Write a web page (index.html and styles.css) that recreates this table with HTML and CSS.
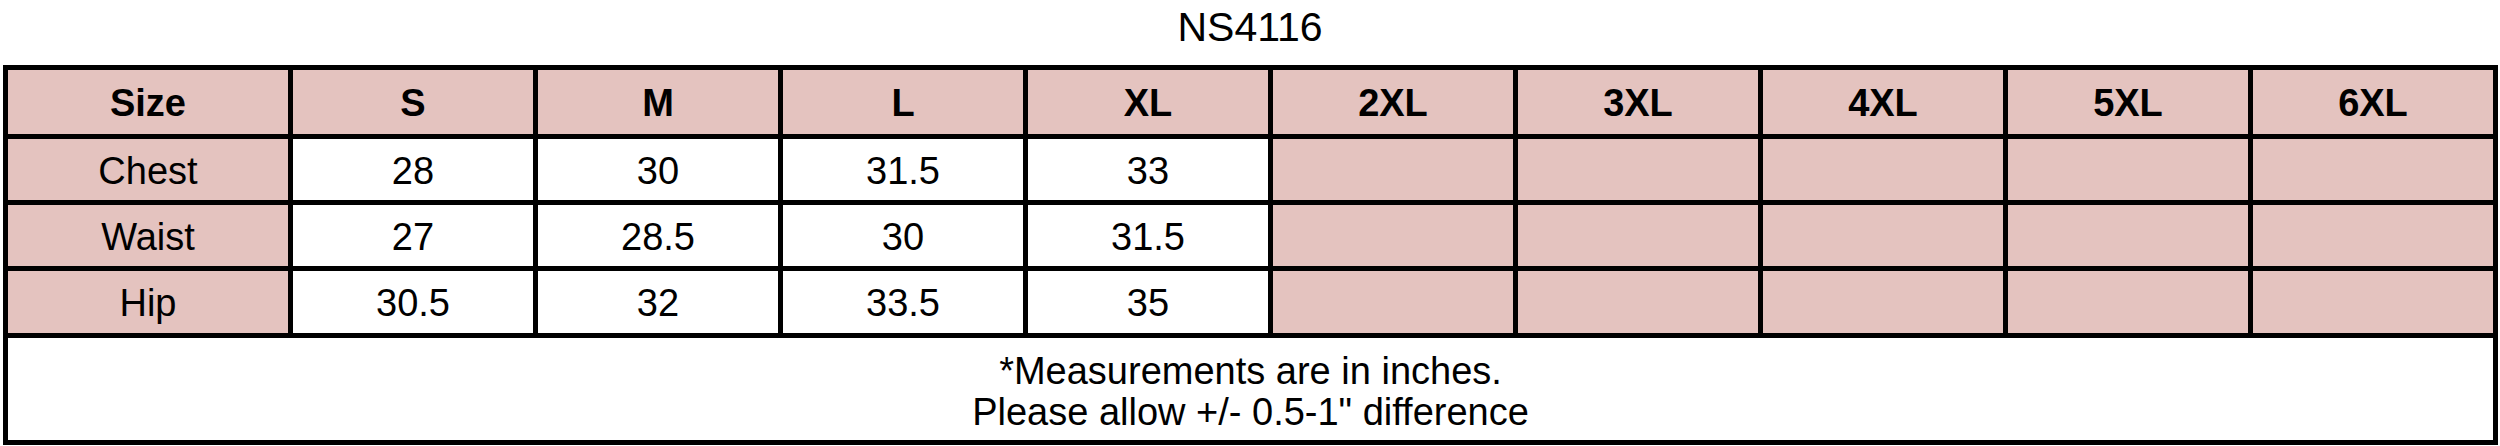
FILE: index.html
```html
<!DOCTYPE html>
<html lang="en">
<head>
  <meta charset="UTF-8" />
  <meta name="viewport" content="width=device-width, initial-scale=1.0"/>
  <title>NS4116 Size Chart</title>
  <link rel="stylesheet" href="styles.css">
</head>
<body>

  <div id="chartTitle">NS4116</div>

  <div id="sizeChart">
    <div class="cell head label">Size</div>
    <div class="cell head">S</div>
    <div class="cell head">M</div>
    <div class="cell head">L</div>
    <div class="cell head">XL</div>
    <div class="cell head">2XL</div>
    <div class="cell head">3XL</div>
    <div class="cell head">4XL</div>
    <div class="cell head">5XL</div>
    <div class="cell head">6XL</div>

    <div class="cell label">Chest</div>
    <div class="cell">28</div>
    <div class="cell">30</div>
    <div class="cell">31.5</div>
    <div class="cell">33</div>
    <div class="cell empty"></div>
    <div class="cell empty"></div>
    <div class="cell empty"></div>
    <div class="cell empty"></div>
    <div class="cell empty"></div>

    <div class="cell label">Waist</div>
    <div class="cell">27</div>
    <div class="cell">28.5</div>
    <div class="cell">30</div>
    <div class="cell">31.5</div>
    <div class="cell empty"></div>
    <div class="cell empty"></div>
    <div class="cell empty"></div>
    <div class="cell empty"></div>
    <div class="cell empty"></div>

    <div class="cell label">Hip</div>
    <div class="cell">30.5</div>
    <div class="cell">32</div>
    <div class="cell">33.5</div>
    <div class="cell">35</div>
    <div class="cell empty"></div>
    <div class="cell empty"></div>
    <div class="cell empty"></div>
    <div class="cell empty"></div>
    <div class="cell empty"></div>

    <div class="cell note">
      *Measurements are in inches.<br>
      Please allow +/- 0.5-1" difference
    </div>
  </div>

</body>
</html>
```

FILE: styles.css
```css
body {
  margin: 0;
  padding: 0;
  background-color: #fff;
  font-family: "Liberation Sans", Arial, sans-serif;
  color: #000;
}

#chartTitle {
  height: 55px;
  line-height: 55px;
  margin-bottom: 10px;
  text-align: center;
  font-size: 41px;
}

#sizeChart {
  display: grid;
  grid-template-columns: 280px repeat(9, 240px);
  grid-template-rows: 64px 61px 61px 62px 102px;
  gap: 5px;
  padding: 5px;
  margin-left: 3px;
  width: 2485px;
  background-color: #000;
}

.cell {
  display: flex;
  align-items: center;
  justify-content: center;
  padding-top: 3px;
  background-color: #fff;
  font-size: 38px;
}

.cell.head {
  background-color: #e4c3bf;
  font-weight: bold;
}

.cell.label,
.cell.empty {
  background-color: #e4c3bf;
}

.cell.note {
  grid-column: 1 / -1;
  text-align: center;
  line-height: 41px;
  padding-top: 6px;
}
```
